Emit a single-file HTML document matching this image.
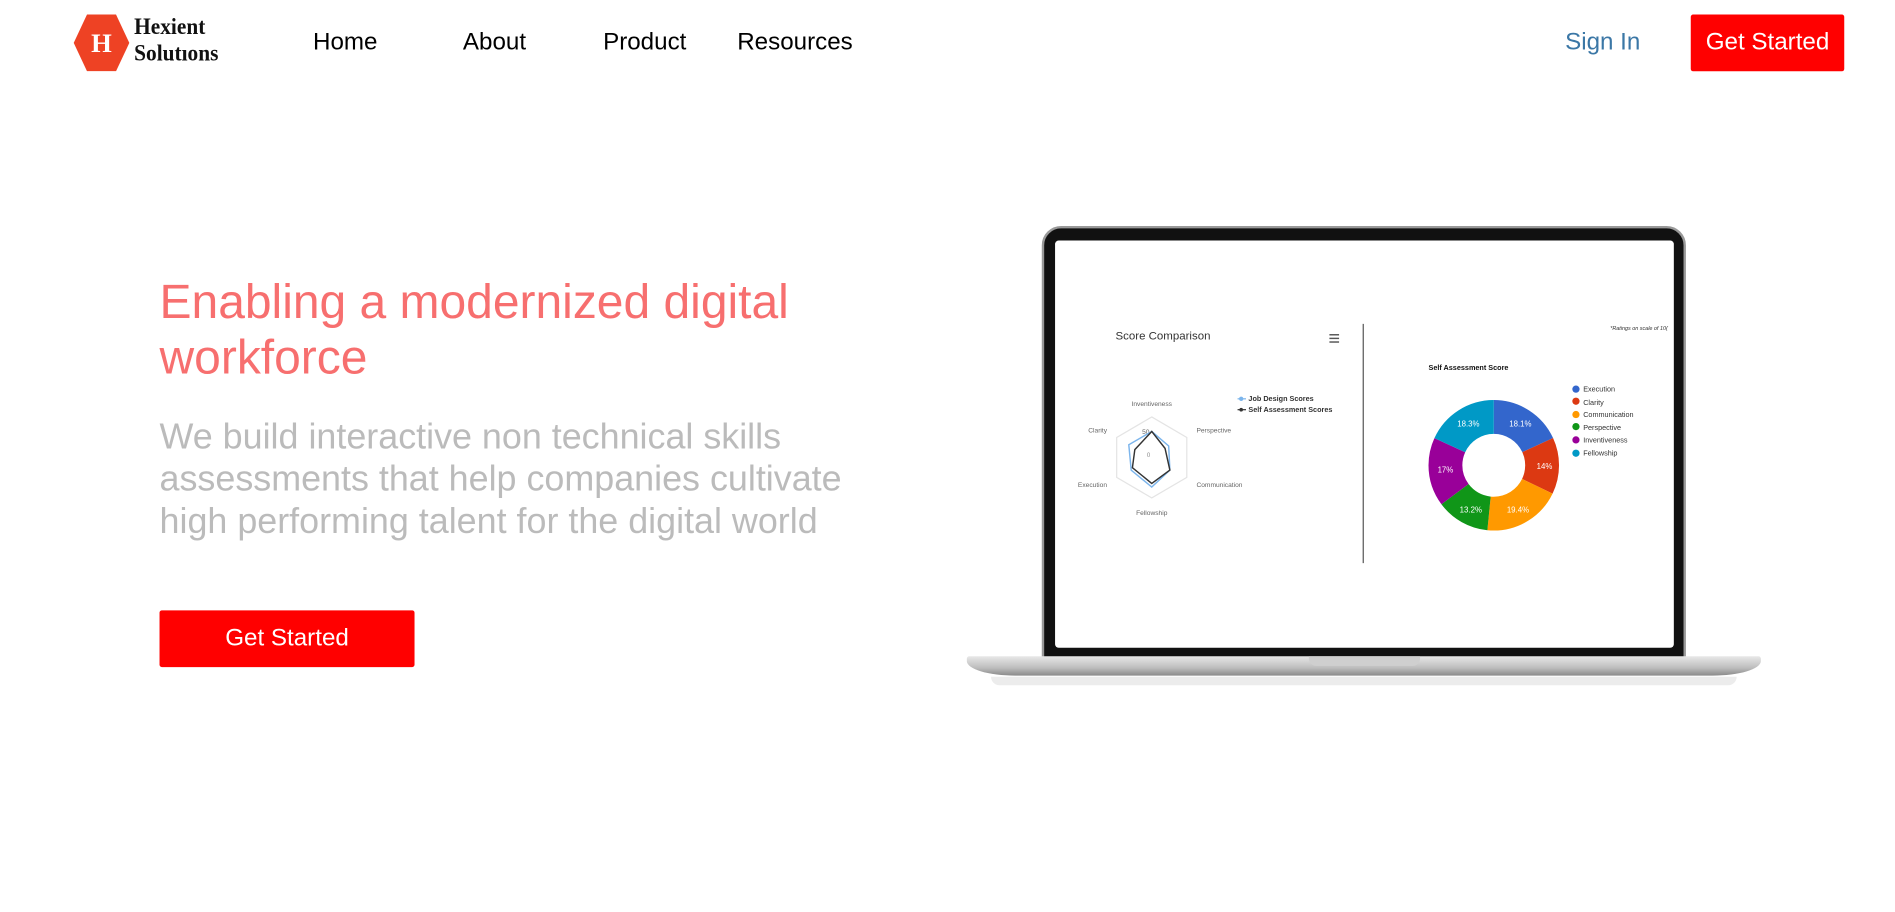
<!DOCTYPE html>
<html><head><meta charset="utf-8"><style>
html,body{margin:0;padding:0;background:#fff;overflow:hidden}
body{width:1895px;height:912px;position:relative}
#w{position:absolute;left:0;top:0;width:1568px;height:755px;transform:scale(1.20855);transform-origin:0 0;font-family:"Liberation Sans",sans-serif}
.a{position:absolute;white-space:nowrap}
.nav{font-size:20px;color:#000;top:24px}
.btn{position:absolute;background:#ff0000;color:#fff;font-size:20px;text-align:center;border-radius:2px}
</style></head><body><div id="w">
<svg class="a" style="left:60px;top:12px" width="48" height="47" viewBox="0 0 48 47"><polygon points="12,0 36,0 47,23.5 36,47 12,47 1,23.5" fill="#ee4224"/><text x="24" y="31" text-anchor="middle" font-family="Liberation Serif,serif" font-size="22" font-weight="bold" fill="#fff">H</text></svg>
<div class="a" style="left:111px;top:12px;font-family:'Liberation Serif',serif;font-size:19px;line-height:22px;color:#111;font-weight:bold;transform:scaleX(0.93);transform-origin:0 0">Hexient<br>Solutıons</div>
<div class="a nav" style="left:259px">Home</div>
<div class="a nav" style="left:383px">About</div>
<div class="a nav" style="left:499px">Product</div>
<div class="a nav" style="left:610px">Resources</div>
<div class="a nav" style="left:1295px;color:#3b77a6">Sign In</div>
<div class="btn" style="left:1399px;top:12px;width:127px;height:47px;line-height:47px">Get Started</div>
<div class="a" style="left:132px;top:227px;font-size:39.7px;line-height:46px;color:#f76f6f">Enabling a modernized digital<br>workforce</div>
<div class="a" style="left:132px;top:344px;font-size:29.7px;line-height:35px;color:#bbb">We build interactive non technical skills<br>assessments that help companies cultivate<br>high performing talent for the digital world</div>
<div class="btn" style="left:132px;top:505px;width:211px;height:47px;line-height:47px">Get Started</div>
<div class="a" style="left:862px;top:187px;width:533px;height:360px;background:#111;border-radius:16px 16px 0 0;border:2px solid #999;box-sizing:border-box"></div>
<div class="a" style="left:873px;top:199px;width:512px;height:337px;background:#fff;border-radius:3px"></div>
<div class="a" style="left:800px;top:543px;width:657px;height:16px;background:linear-gradient(#e8e8e8,#bdbdbd 60%,#8a8a8a);border-radius:2px 2px 40px 40px / 2px 2px 12px 12px"></div>
<div class="a" style="left:1083px;top:543px;width:92px;height:8px;background:#cfcfcf;border-radius:0 0 6px 6px"></div>
<div class="a" style="left:820px;top:560px;width:617px;height:7px;background:#ececec;border-radius:0 0 40px 40px"></div>
<svg class="a" style="left:873px;top:199px" width="512" height="337" viewBox="873 199 512 337" font-family="Liberation Sans,sans-serif">
<text x="923" y="281" font-size="9.5" fill="#333">Score Comparison</text>
<g stroke="#555" stroke-width="1.2"><line x1="1100" y1="277" x2="1108" y2="277"/><line x1="1100" y1="280" x2="1108" y2="280"/><line x1="1100" y1="283" x2="1108" y2="283"/></g>
<line x1="1128" y1="268" x2="1128" y2="466" stroke="#555" stroke-width="1"/>
<polygon points="953,345 982,362 982,395 953,412 924,395 924,362" fill="none" stroke="#e4e4e4"/>
<text x="953" y="336" font-size="5.5" fill="#666" text-anchor="middle">Inventiveness</text>
<text x="990" y="358" font-size="5.5" fill="#666">Perspective</text>
<text x="990" y="403" font-size="5.5" fill="#666">Communication</text>
<text x="953" y="426" font-size="5.5" fill="#666" text-anchor="middle">Fellowship</text>
<text x="916" y="403" font-size="5.5" fill="#666" text-anchor="end">Execution</text>
<text x="916" y="358" font-size="5.5" fill="#666" text-anchor="end">Clarity</text>
<text x="945" y="359" font-size="5.5" fill="#666">50</text><text x="949" y="378" font-size="5" fill="#888">0</text>
<polygon points="953,357 967,369 968,389 953,403 936,389 934,368" fill="none" stroke="#7cb5ec" stroke-width="1.2"/>
<polygon points="953,357 964,371 968,389 953,400 937,387 939,372" fill="none" stroke="#333" stroke-width="1.2"/>
<line x1="1024" y1="330" x2="1031" y2="330" stroke="#7cb5ec"/><circle cx="1027" cy="330" r="1.8" fill="#7cb5ec"/>
<line x1="1024" y1="339" x2="1031" y2="339" stroke="#333"/><circle cx="1027" cy="339" r="1.5" fill="#333"/>
<text x="1033" y="332" font-size="6" font-weight="bold" fill="#333">Job Design Scores</text>
<text x="1033" y="341" font-size="6" font-weight="bold" fill="#333">Self Assessment Scores</text>
<text x="1380" y="273" font-size="4.5" font-style="italic" fill="#333" text-anchor="end">*Ratings on scale of 10(</text>
<text x="1182" y="306" font-size="6" font-weight="bold" fill="#111">Self Assessment Score</text>
<g transform="rotate(-90 1236 385)" fill="none" stroke-width="28">
<circle cx="1236" cy="385" r="40" stroke="#3366cc" stroke-dasharray="45.49 300" stroke-dashoffset="0"/>
<circle cx="1236" cy="385" r="40" stroke="#dc3912" stroke-dasharray="35.19 300" stroke-dashoffset="-45.49"/>
<circle cx="1236" cy="385" r="40" stroke="#ff9900" stroke-dasharray="48.76 300" stroke-dashoffset="-80.68"/>
<circle cx="1236" cy="385" r="40" stroke="#109618" stroke-dasharray="33.18 300" stroke-dashoffset="-129.44"/>
<circle cx="1236" cy="385" r="40" stroke="#990099" stroke-dasharray="42.73 300" stroke-dashoffset="-162.62"/>
<circle cx="1236" cy="385" r="40" stroke="#0099c6" stroke-dasharray="45.99 300" stroke-dashoffset="-205.35"/>
</g>
<g font-size="6.5" fill="#fff" text-anchor="middle"><text x="1258" y="353">18.1%</text><text x="1278" y="388">14%</text><text x="1256" y="424">19.4%</text><text x="1217" y="424">13.2%</text><text x="1196" y="391">17%</text><text x="1215" y="353">18.3%</text></g>
<g font-size="6" fill="#333"><circle cx="1304" cy="322" r="3" fill="#3366cc"/><text x="1310" y="324">Execution</text>
<circle cx="1304" cy="332" r="3" fill="#dc3912"/><text x="1310" y="335">Clarity</text>
<circle cx="1304" cy="343" r="3" fill="#ff9900"/><text x="1310" y="345">Communication</text>
<circle cx="1304" cy="353" r="3" fill="#109618"/><text x="1310" y="356">Perspective</text>
<circle cx="1304" cy="364" r="3" fill="#990099"/><text x="1310" y="366">Inventiveness</text>
<circle cx="1304" cy="375" r="3" fill="#0099c6"/><text x="1310" y="377">Fellowship</text></g>
</svg>
</div></body></html>
